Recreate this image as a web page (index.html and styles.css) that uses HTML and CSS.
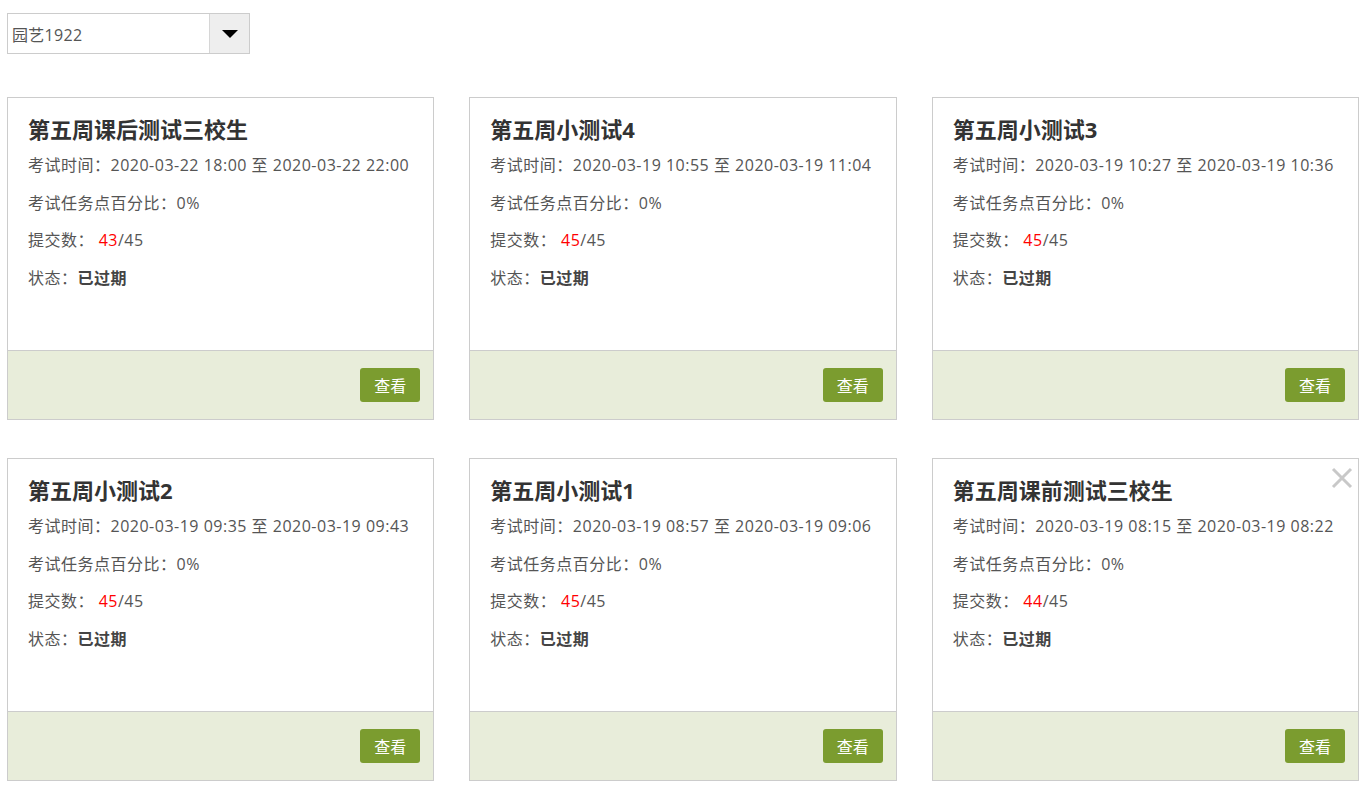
FILE: index.html
```html
<!DOCTYPE html>
<html lang="zh-CN">
<head>
  <meta charset="UTF-8" />
  <meta name="viewport" content="width=device-width, initial-scale=1.0" />
  <title>考试列表</title>
  <link rel="stylesheet" href="styles.css">
</head>
<body>

  <div class="toolbar">
    <div class="select-box">
      <span class="select-text">园艺1922</span>
      <span class="select-btn"><span class="caret"></span></span>
    </div>
  </div>

  <div class="card-grid">
    <div class="card">
      <div class="card-body">
        <h3>第五周课后测试三校生</h3>
        <p>考试时间：2020-03-22 18:00 至 2020-03-22 22:00</p>
        <p>考试任务点百分比：0%</p>
        <p>提交数： <span class="num">43</span>/45</p>
        <p>状态：<b>已过期</b></p>
      </div>
      <div class="card-foot"><button class="view-btn">查看</button></div>
    </div>

    <div class="card">
      <div class="card-body">
        <h3>第五周小测试4</h3>
        <p>考试时间：2020-03-19 10:55 至 2020-03-19 11:04</p>
        <p>考试任务点百分比：0%</p>
        <p>提交数： <span class="num">45</span>/45</p>
        <p>状态：<b>已过期</b></p>
      </div>
      <div class="card-foot"><button class="view-btn">查看</button></div>
    </div>

    <div class="card">
      <div class="card-body">
        <h3>第五周小测试3</h3>
        <p>考试时间：2020-03-19 10:27 至 2020-03-19 10:36</p>
        <p>考试任务点百分比：0%</p>
        <p>提交数： <span class="num">45</span>/45</p>
        <p>状态：<b>已过期</b></p>
      </div>
      <div class="card-foot"><button class="view-btn">查看</button></div>
    </div>

    <div class="card">
      <div class="card-body">
        <h3>第五周小测试2</h3>
        <p>考试时间：2020-03-19 09:35 至 2020-03-19 09:43</p>
        <p>考试任务点百分比：0%</p>
        <p>提交数： <span class="num">45</span>/45</p>
        <p>状态：<b>已过期</b></p>
      </div>
      <div class="card-foot"><button class="view-btn">查看</button></div>
    </div>

    <div class="card">
      <div class="card-body">
        <h3>第五周小测试1</h3>
        <p>考试时间：2020-03-19 08:57 至 2020-03-19 09:06</p>
        <p>考试任务点百分比：0%</p>
        <p>提交数： <span class="num">45</span>/45</p>
        <p>状态：<b>已过期</b></p>
      </div>
      <div class="card-foot"><button class="view-btn">查看</button></div>
    </div>

    <div class="card">
      <span class="close">
        <svg width="22" height="22" viewBox="0 0 22 22">
          <path d="M2 2 L20 20 M20 2 L2 20" stroke="#c8c8c8" stroke-width="3" fill="none" />
        </svg>
      </span>
      <div class="card-body">
        <h3>第五周课前测试三校生</h3>
        <p>考试时间：2020-03-19 08:15 至 2020-03-19 08:22</p>
        <p>考试任务点百分比：0%</p>
        <p>提交数： <span class="num">44</span>/45</p>
        <p>状态：<b>已过期</b></p>
      </div>
      <div class="card-foot"><button class="view-btn">查看</button></div>
    </div>
  </div>

</body>
</html>
```

FILE: styles.css
```css
* {
  box-sizing: border-box;
}

body {
  margin: 0;
  padding: 13px 5px 0 7px;
  font-family: "Open Sans", "Noto Sans CJK SC", sans-serif;
  color: #444;
  background: #fff;
}

.toolbar {
  margin-bottom: 43px;
}

.select-box {
  display: flex;
  width: 243px;
  height: 41px;
  border: 1px solid #ccc;
  background: #fff;
}

.select-text {
  flex-grow: 1;
  display: flex;
  align-items: center;
  padding-left: 4px;
  font-size: 16px;
  letter-spacing: 0.3px;
  color: #555;
}

.select-btn {
  width: 40px;
  display: flex;
  align-items: center;
  justify-content: center;
  background: #eee;
  border-left: 1px solid #d6d6d6;
}

.caret {
  width: 0;
  height: 0;
  border-top: 8px solid #000;
  border-left: 8px solid transparent;
  border-right: 8px solid transparent;
}

.card-grid {
  display: grid;
  grid-template-columns: repeat(3, 1fr);
  column-gap: 35px;
  row-gap: 38px;
}

.card {
  position: relative;
  border: 1px solid #ccc;
  height: 323px;
  display: flex;
  flex-direction: column;
}

.card-body {
  flex-grow: 1;
  padding: 14px 20px 0 20px;
}

.card-body h3 {
  margin: 0 0 1px;
  font-size: 22px;
  font-weight: bold;
  color: #333;
  line-height: 34px;
}

.card-body p {
  margin: 0;
  font-size: 16px;
  line-height: 37.5px;
  letter-spacing: 0.5px;
  color: #555;
  white-space: nowrap;
}

.card-body p b {
  color: #444;
}

.num {
  color: #ff0000;
}

.card-foot {
  height: 69px;
  background: #e8edda;
  border-top: 1px solid #ccc;
  display: flex;
  justify-content: flex-end;
  align-items: center;
  padding-right: 13px;
}

.view-btn {
  width: 60px;
  height: 34px;
  border: none;
  border-radius: 3px;
  background: #7b9c2f;
  color: #fff;
  font-family: "Noto Sans CJK SC", sans-serif;
  font-size: 16px;
  cursor: pointer;
}

.close {
  position: absolute;
  top: 8px;
  right: 5px;
  width: 22px;
  height: 22px;
}
```
